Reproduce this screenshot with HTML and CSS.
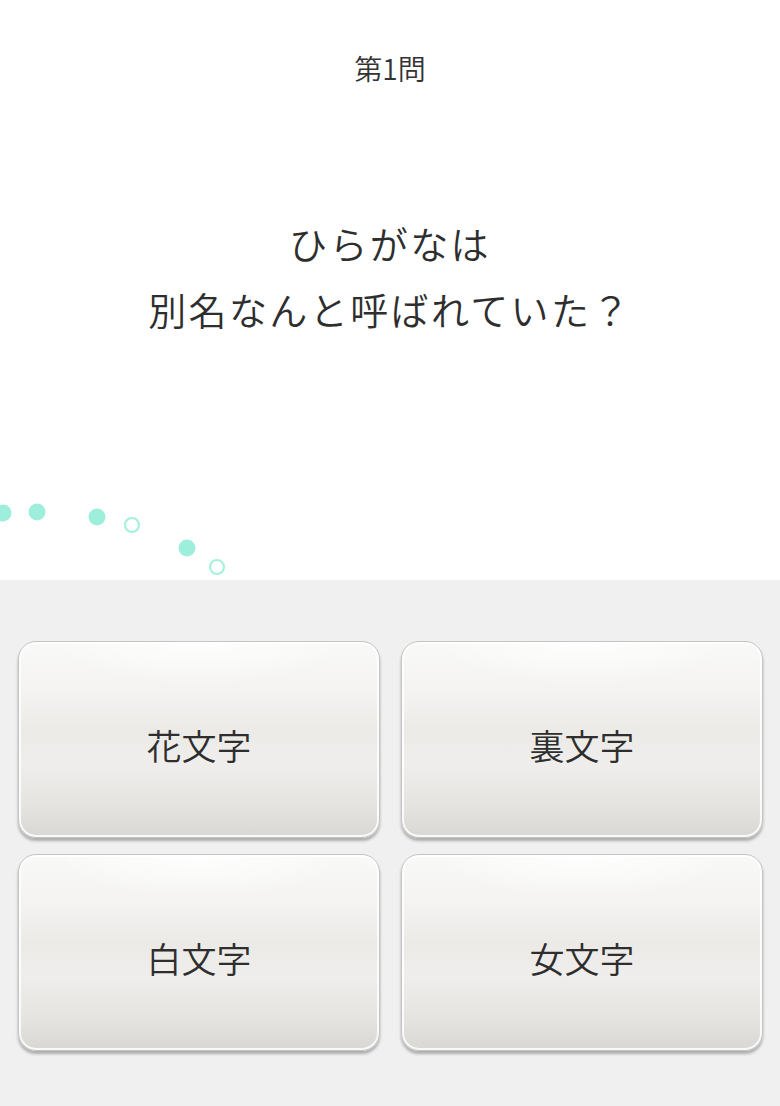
FILE: index.html
```html
<!DOCTYPE html>
<html lang="ja">
<head>
    <meta charset="UTF-8">
    <meta name="viewport" content="width=device-width, initial-scale=1.0">
    <title>クイズ</title>
    <link rel="stylesheet" href="styles.css">
</head>
<body>
    <div class="question-area">
        <p class="question-number">第1問</p>
        <h1 class="question-text">ひらがなは<br>別名なんと呼ばれていた？</h1>

        <svg class="dots" width="240" height="90" viewBox="0 0 240 90">
            <circle cx="3" cy="33" r="8.5" fill="#9eeedc"/>
            <circle cx="37" cy="32" r="8.5" fill="#9eeedc"/>
            <circle cx="97" cy="37" r="8.5" fill="#9eeedc"/>
            <circle cx="132" cy="45" r="7" fill="none" stroke="#a6f0e0" stroke-width="2.2"/>
            <circle cx="187" cy="68" r="8.5" fill="#9eeedc"/>
            <circle cx="217" cy="87" r="7" fill="none" stroke="#a6f0e0" stroke-width="2.2"/>
        </svg>
    </div>

    <div class="answer-area">
        <button class="answer">花文字</button>
        <button class="answer">裏文字</button>
        <button class="answer">白文字</button>
        <button class="answer">女文字</button>
    </div>
</body>
</html>
```

FILE: styles.css
```css
    body {
        font-family: "Noto Sans CJK JP", "Noto Sans", sans-serif;
        background-color: #f0f0f0;
        color: #333;
        margin: 0;
        padding: 0;
    }

    .question-area {
        position: relative;
        background-color: #ffffff;
        height: 580px;
        text-align: center;
        overflow: hidden;
    }

    .question-number {
        margin: 0;
        padding-top: 49px;
        font-size: 28px;
        font-weight: 350;
        line-height: 38px;
        color: #333;
    }

    .question-text {
        margin: 0;
        padding-top: 123px;
        font-size: 38px;
        font-weight: 350;
        letter-spacing: 2.4px;
        line-height: 66px;
        color: #2e2e2e;
    }

    .dots {
        position: absolute;
        left: 0;
        top: 480px;
        overflow: visible;
    }

    .answer-area {
        display: grid;
        grid-template-columns: 1fr 1fr;
        column-gap: 21px;
        row-gap: 16px;
        padding: 61px 17px 50px 18px;
    }

    .answer {
        height: 197px;
        border: 1px solid #c4c4c2;
        border-radius: 18px;
        font-family: inherit;
        font-size: 35px;
        font-weight: 350;
        color: #2e2e2e;
        cursor: pointer;
        background:
            radial-gradient(ellipse 40% 22% at 50% 0%, rgba(255, 255, 255, 0.9), rgba(255, 255, 255, 0)),
            linear-gradient(to bottom, #f9f9f7 0%, #f4f3f1 25%, #eceae7 46%, #efeeec 62%, #e4e3e0 85%, #d8d7d4 100%);
        box-shadow: inset 0 0 0 2px rgba(255, 255, 255, 0.85), 0 3px 3px rgba(0, 0, 0, 0.28);
        padding: 10px 0 0 0;
    }
```
